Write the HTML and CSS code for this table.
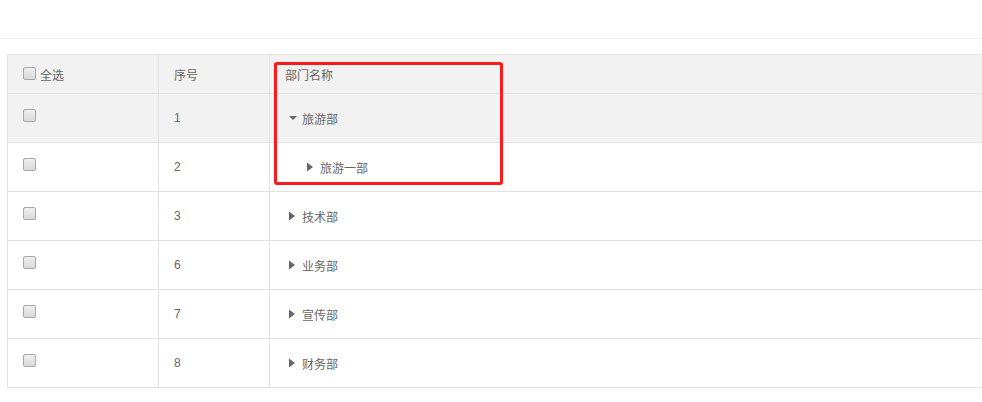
FILE: index.html
```html
<!DOCTYPE html>
<html lang="zh-CN">
<head>
<meta charset="utf-8">
<title>部门管理</title>
<link rel="stylesheet" href="styles.css">
</head>
<body>
<div class="page">
  <div class="topbar"></div>
  <div class="grid">
    <div class="row head">
      <div class="cell"><span class="cb"></span><span class="label">全选</span></div>
      <div class="cell">序号</div>
      <div class="cell">部门名称</div>
    </div>
    <div class="row hover">
      <div class="cell"><span class="cb"></span></div>
      <div class="cell">1</div>
      <div class="cell"><span class="caret"><svg width="14" height="10" viewBox="0 0 14 10"><polygon points="4,3 12,3 8,7" fill="#666"/></svg></span>旅游部</div>
    </div>
    <div class="row">
      <div class="cell"><span class="cb"></span></div>
      <div class="cell">2</div>
      <div class="cell"><span class="indent"></span><span class="caret"><svg width="14" height="10" viewBox="0 0 14 10"><polygon points="4,0.5 10,5 4,9.5" fill="#666"/></svg></span>旅游一部</div>
    </div>
    <div class="row">
      <div class="cell"><span class="cb"></span></div>
      <div class="cell">3</div>
      <div class="cell"><span class="caret"><svg width="14" height="10" viewBox="0 0 14 10"><polygon points="4,0.5 10,5 4,9.5" fill="#666"/></svg></span>技术部</div>
    </div>
    <div class="row">
      <div class="cell"><span class="cb"></span></div>
      <div class="cell">6</div>
      <div class="cell"><span class="caret"><svg width="14" height="10" viewBox="0 0 14 10"><polygon points="4,0.5 10,5 4,9.5" fill="#666"/></svg></span>业务部</div>
    </div>
    <div class="row">
      <div class="cell"><span class="cb"></span></div>
      <div class="cell">7</div>
      <div class="cell"><span class="caret"><svg width="14" height="10" viewBox="0 0 14 10"><polygon points="4,0.5 10,5 4,9.5" fill="#666"/></svg></span>宣传部</div>
    </div>
    <div class="row">
      <div class="cell"><span class="cb"></span></div>
      <div class="cell">8</div>
      <div class="cell"><span class="caret"><svg width="14" height="10" viewBox="0 0 14 10"><polygon points="4,0.5 10,5 4,9.5" fill="#666"/></svg></span>财务部</div>
    </div>
  </div>
  <div class="highlight"></div>
</div>
</body>
</html>
```
FILE: styles.css
```css
* { box-sizing: border-box; }
html, body { margin: 0; padding: 0; background: #fff; overflow: hidden; }
body {
  font-family: "Liberation Sans", "Noto Sans CJK SC", sans-serif;
  font-size: 12px;
  color: #666;
}
.page { position: relative; width: 982px; height: 402px; }
.topbar { height: 39px; border-bottom: 1px solid #f0f0f0; }
.grid {
  margin: 15px 0 0 7px;
  border-left: 1px solid #e2e2e2;
  border-top: 1px solid #e2e2e2;
}
.row {
  display: grid;
  grid-template-columns: 151px 111px 1fr;
  height: 49px;
  border-bottom: 1px solid #e2e2e2;
  background: #fff;
}
.row.head { height: 39px; background: #f2f2f2; }
.row.hover { background: #f2f2f2; }
.cell {
  display: flex;
  align-items: center;
  padding-left: 15px;
  border-right: 1px solid #e2e2e2;
  white-space: nowrap;
}
.cell:last-child { border-right: none; }
.cb {
  display: inline-block;
  width: 13px;
  height: 13px;
  border: 1px solid #a8a8a8;
  border-radius: 2px;
  background: linear-gradient(#efefef, #dadada);
  margin-bottom: 6px;
  flex: none;
}
.head .cb { margin-bottom: 2px; }
.label { margin-left: 4px; }
.caret { display: inline-flex; width: 17px; flex: none; }
.caret svg { display: block; }
.indent { display: inline-block; width: 18px; flex: none; }
.highlight {
  position: absolute;
  left: 274px;
  top: 62px;
  width: 229px;
  height: 123px;
  border: 3px solid #fe1a1a;
  border-radius: 3px;
}
```
